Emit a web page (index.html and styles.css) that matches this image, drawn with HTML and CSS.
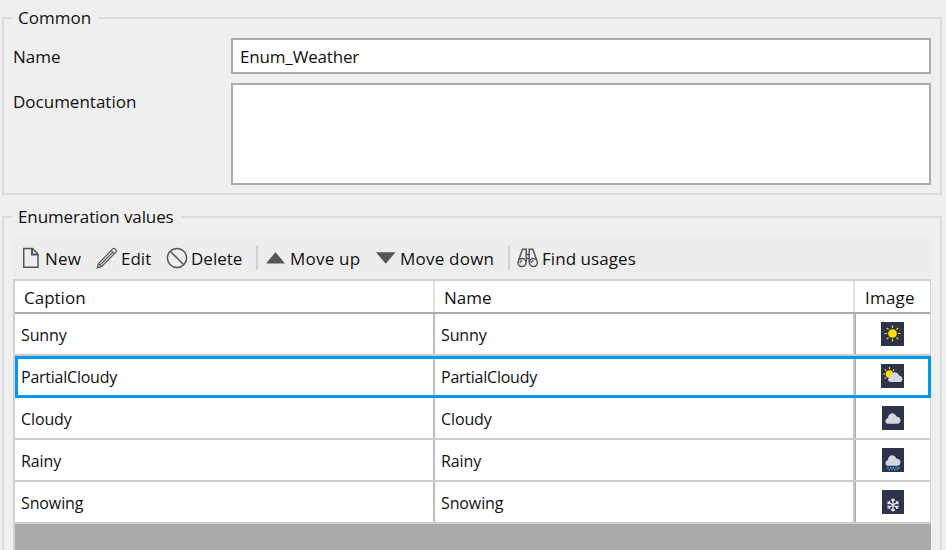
FILE: index.html
```
<!DOCTYPE html>
<html lang="en">
<head>
<meta charset="utf-8">
<title>Enumeration</title>
<link rel="stylesheet" href="styles.css">
</head>
<body>
<fieldset class="group common">
  <legend>Common</legend>
  <div class="field"><label for="name">Name</label><input id="name" type="text" value="Enum_Weather"></div>
  <div class="field doc"><label for="doc">Documentation</label><textarea id="doc"></textarea></div>
</fieldset>
<fieldset class="group values">
  <legend class="wide">Enumeration values</legend>
  <div class="toolbar">
    <span class="tool new"><svg width="18" height="22" viewBox="0 0 18 22"><path d="M1.7 1.5H10.5L16 7V20.3H1.7Z" class="line"/><path d="M10 1.5V7.5H16" class="line thick"/></svg><span>New</span></span>
    <span class="tool edit"><svg width="22" height="22" viewBox="0 0 22 22"><path d="M1.2 20.8L2.4 16.8L16.5 2.1Q17.8.8 19.4 2.1Q21.1 3.8 19.7 5.3L5.4 19.6Z M2.4 16.8L5.4 19.6M15.2 3.6L18.3 6.7M4 18.1L16.7 5.3" class="line thin"/></svg><span>Edit</span></span>
    <span class="tool delete"><svg width="22" height="22" viewBox="0 0 22 22"><circle cx="11" cy="11" r="9.6" class="line"/><path d="M4.2 4.2L17.8 17.8" class="line"/></svg><span>Delete</span></span>
    <i class="sep"></i>
    <span class="tool up"><svg width="20" height="12" viewBox="0 0 20 12"><path d="M0 11.5L9.5 .2L19 11.5Z" fill="#555"/></svg><span>Move up</span></span>
    <span class="tool down"><svg width="20" height="12" viewBox="0 0 20 12"><path d="M0 .2H19.5L9.7 11.8Z" fill="#555"/></svg><span>Move down</span></span>
    <i class="sep"></i>
    <span class="tool find"><svg width="22" height="20" viewBox="0 0 22 20"><g class="line"><circle cx="5" cy="14.6" r="4"/><circle cx="16.4" cy="14.6" r="4"/><path d="M1.7 12L5.5 1.2H9.2V14M19.7 12L15.8 1.2H12.2V14M9 6.5H12.4M9 10.5H12.4"/></g><path d="M3 15Q3 13 5.2 12.7M14.4 15Q14.4 13 16.6 12.7" class="line thin"/></svg><span>Find usages</span></span>
  </div>
  <div class="grid">
    <div class="row head"><div>Caption</div><div>Name</div><div>Image</div></div>
    <div class="row"><div>Sunny</div><div>Sunny</div><div><svg class="pic" width="23" height="24" viewBox="0 0 23 24"><g class="sun"><circle cx="11.5" cy="11.5" r="4.3"/><path d="M11.5 3.5V6M11.5 17V19.5M3.5 11.5H6M17 11.5H19.5M5.8 5.8L7.5 7.5M15.5 15.5L17.2 17.2M17.2 5.8L15.5 7.5M7.5 15.5L5.8 17.2"/></g></svg></div></div>
    <div class="row selected"><div>PartialCloudy</div><div>PartialCloudy</div><div><svg class="pic" width="23" height="24" viewBox="0 0 23 24"><g class="sun"><circle cx="8.5" cy="10" r="3.8"/><path d="M8.5 3V5M2 10H4M13.2 5.3L12 6.5M3.8 5.3L5 6.5M5 13.5L3.8 14.7"/></g><path d="M9.5 18Q6.5 17.5 7.3 14.8Q8 13 9.3 12.8Q10 8.6 13.5 8.3Q17.2 8.5 18 11.5Q21.5 12.3 21.4 15.2Q21 18 18.5 18Z" class="cloud"/></svg></div></div>
    <div class="row"><div>Cloudy</div><div>Cloudy</div><div><svg class="pic" width="22" height="24" viewBox="0 0 22 24"><path d="M6 17.8Q3 17.2 3.6 14.2Q4.3 12.2 6 12Q6.3 7.6 10 7.2Q13.3 7.4 14.4 10.6Q18.7 11.2 18.5 14.5Q18 17.8 15.5 17.8Z" class="cloud"/></svg></div></div>
    <div class="row"><div>Rainy</div><div>Rainy</div><div><svg class="pic" width="22" height="24" viewBox="0 0 22 24"><path d="M6 17.8Q3 17.2 3.6 14.2Q4.3 12.2 6 12Q6.3 7.6 10 7.2Q13.3 7.4 14.4 10.6Q18.7 11.2 18.5 14.5Q18 17.8 15.5 17.8Z" class="cloud"/><path d="M6.5 19L4.8 20.8M9.5 19L6.5 22.4M12 19L9.5 22M14.8 19L12 22.4M17.5 19L15 22" class="rain"/></svg></div></div>
    <div class="row"><div>Snowing</div><div>Snowing</div><div><svg class="pic" width="22" height="24" viewBox="0 0 22 24"><path d="M11 8.5V21.5M5.4 11.8L16.6 18.2M16.6 11.8L5.4 18.2M9.3 9.5L11 11.3L12.7 9.5M9.3 20.5L11 18.7L12.7 20.5M5.5 13.8L7.8 13.2L7.3 11M16.5 13.8L14.2 13.2L14.7 11M5.5 16.2L7.8 16.8L7.3 19M16.5 16.2L14.2 16.8L14.7 19" class="snow"/></svg></div></div>
    <div class="rest"></div>
  </div>
</fieldset>
</body>
</html>
```
FILE: styles.css
```
* { box-sizing: border-box; }
html, body { height: 550px; overflow: hidden; }
body { margin: 0; background: #efefef; color: #111; font: 17px/24px "Open Sans", "Noto Sans", sans-serif; }
.group { width: 940px; margin: 0 0 0 2px; padding: 0; border: 2px solid #dcdcdc; min-width: 0; }
legend { display: block; height: 24px; margin-left: 8px; padding: 0 7px 0 6px; }
.wide { letter-spacing: -.12px; }
.common { height: 189px; margin-top: 6px; }
.values { height: 360px; margin-top: 10px; }
.field { display: flex; margin-left: 9px; padding-top: 8px; }
.field label { width: 218px; padding-top: 7px; }
.doc { padding-top: 9px; }
input, textarea { width: 700px; height: 36px; margin: 0; padding: 0 7px; border: 2px solid #abaab0; background: #fff; color: #111; font: inherit; letter-spacing: -.17px; outline: 0; }
textarea { height: 102px; resize: none; }
.toolbar { display: flex; align-items: center; width: 918px; height: 42px; margin: 8px 0 0 9px; background: #ededed; }
.tool { display: flex; align-items: center; white-space: nowrap; flex: none; }
.tool svg { display: block; flex: none; }
.tool span { padding-top: 1px; }
.new { width: 75px; padding-left: 9px; } .new span { margin-left: 5px; letter-spacing: .15px; }
.edit { width: 70px; padding-left: 8px; } .edit span { margin-left: 3px; }
.delete { width: 90px; padding-left: 8px; } .delete span { margin-left: 3px; }
.sep { flex: none; width: 2px; height: 24px; margin-left: 8px; background: #d0d0d5; }
.up { width: 110px; padding-left: 8px; } .up span, .down span { margin-left: 4px; letter-spacing: .22px; }
.down { width: 132px; padding-left: 8px; }
.find { padding-left: 7px; } .find span { margin-left: 3px; letter-spacing: .06px; }
.line { fill: none; stroke: #555; stroke-width: 1.5; }
.thick { stroke-width: 2; } .thin { stroke-width: 1.2; }
.grid { width: 918px; margin-left: 9px; border: solid #d0d0d0; border-width: 2px 1px 0 2px; }
.row { display: grid; grid-template-columns: 420px 420px 1fr; height: 42px; background: #fff; border-bottom: 2px solid #ccc; font-size: 16px; letter-spacing: -.12px; }
.row > div { display: flex; align-items: center; padding: 2px 0 0 6px; border-right: 2px solid #bebebe; }
.row > div:nth-child(2) { border-right-color: #c8c8c8; }
.row > div:nth-child(3) { padding: 0 1px 0 0; border-right: 0; justify-content: center; border-left: 1px solid #aaa; }
.row.head { height: 33px; border-bottom-color: #aaa; font-size: 17px; letter-spacing: 0; }
.row.head > div { padding: 2px 0 0 9px; border-right-color: #e2e2e2; }
.row.head > div:nth-child(3) { padding: 2px 0 0 10px; border-left: 0; justify-content: flex-start; letter-spacing: .2px; }
.row.selected { width: 916px; border: 3px solid #0099ee; grid-template-columns: 417px 420px 1fr; letter-spacing: -.24px; }
.row.selected > div { padding-top: 0; }
.row.selected > div:first-child { padding-left: 3px; }
.row.selected > div:nth-child(3) { padding: 0; justify-content: flex-start; padding-left: 25px; align-items: flex-start; padding-top: 5px; }
.rest { height: 40px; margin-right: -1px; background: #aaa; }
.pic { display: block; background: #2e334c; }
.sun { fill: #ffdf00; stroke: #ffdf00; stroke-width: 1.2; } .sun circle { stroke: none; }
.cloud { fill: #d5d7df; }
.rain { fill: none; stroke: #3e9bc5; stroke-width: 1.5; stroke-dasharray: 2 .5; }
.snow { fill: none; stroke: #eee; stroke-width: 1.3; }
```
